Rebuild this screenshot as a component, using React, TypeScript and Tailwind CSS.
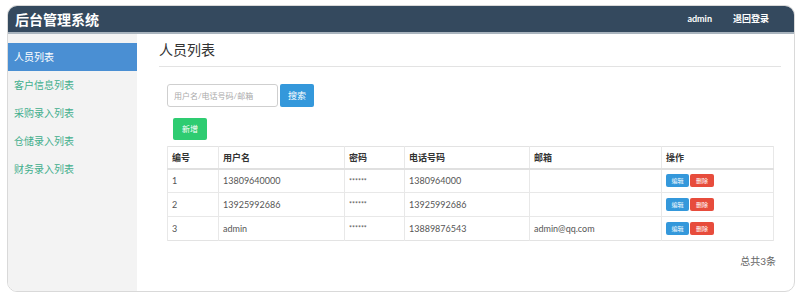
import { useState } from 'react'

type User = { id: number; name: string; phone: string; email: string }

const users: User[] = [
  { id: 1, name: '13809640000', phone: '1380964000', email: '' },
  { id: 2, name: '13925992686', phone: '13925992686', email: '' },
  { id: 3, name: 'admin', phone: '13889876543', email: 'admin@qq.com' },
]

const menu = ['人员列表', '客户信息列表', '采购录入列表', '仓储录入列表', '财务录入列表']

const font = { fontFamily: 'Lato, "Noto Sans CJK SC", sans-serif' }

/** 后台管理：人员列表页 */
export default function App() {
  const [active] = useState(0)
  const [keyword, setKeyword] = useState('')

  return (
    <div className="h-[298px] w-[800px] bg-white pb-[6px] pl-[7px] pr-[5px] pt-[5px]" style={font}>
      <div className="flex h-full flex-col overflow-hidden rounded-[10px] border border-[#d9d9d9] bg-white">
        <header className="flex h-[28px] shrink-0 items-center border-b-2 border-[#a9b4be] bg-[#34495e] pl-[7px] pr-[25px] text-white">
          <span className="text-[14px] font-bold">后台管理系统</span>
          <span className="ml-auto text-[9px] font-bold">admin</span>
          <span className="ml-[21px] text-[9px] font-bold">退回登录</span>
        </header>

        <div className="flex min-h-0 flex-1">
          <aside className="w-[129px] shrink-0 bg-[#f3f3f3] pt-[9px]">
            {menu.map((m, i) => (
              <div
                key={m}
                className={
                  i === active
                    ? 'flex h-[28px] items-center bg-[#4a8fd3] pl-[6px] text-[10px] text-white'
                    : 'flex h-[28px] items-center pl-[6px] text-[10px] text-[#3fae8c]'
                }
              >
                {m}
              </div>
            ))}
          </aside>

          <main className="flex-1 pl-[22px] pr-[13px] pt-[6px]">
            <h1 className="border-b border-[#e3e3e3] pb-[7px] text-[14px] leading-[19px] text-[#333]">人员列表</h1>

            <div className="mt-[17px] flex items-center gap-[2px] pl-[8px]">
              <input
                value={keyword}
                onChange={(e) => setKeyword(e.target.value)}
                placeholder="用户名/电话号码/邮箱"
                className="h-[23px] w-[111px] rounded-[3px] border border-[#cfcfcf] px-[6px] text-[8px] text-[#555] outline-none placeholder:text-[#aaa]"
              />
              <button className="h-[23px] w-[34px] rounded-[2px] bg-[#3498db] text-[9px] text-white">搜索</button>
            </div>

            <button className="ml-[14px] mt-[11px] h-[22px] w-[34px] rounded-[2px] bg-[#2ecc71] text-[8px] text-white">新增</button>

            <table className="ml-[8px] mt-[6px] w-[607px] table-fixed border-collapse border border-[#e3e3e3] text-[9px] text-[#555]">
              <colgroup>
                <col className="w-[51px]" />
                <col className="w-[126px]" />
                <col className="w-[60px]" />
                <col className="w-[125px]" />
                <col className="w-[132px]" />
                <col />
              </colgroup>
              <thead>
                <tr className="h-[22px] border-b-2 border-[#e0e0e0] text-left text-[#333]">
                  {['编号', '用户名', '密码', '电话号码', '邮箱', '操作'].map((h) => (
                    <th key={h} className="border-x border-[#e8e8e8] pl-[4px] font-semibold">
                      {h}
                    </th>
                  ))}
                </tr>
              </thead>
              <tbody>
                {users.map((u) => (
                  <tr key={u.id} className="h-[24px] border-t border-[#e8e8e8]">
                    <td className="border-x border-[#e8e8e8] pl-[4px]">{u.id}</td>
                    <td className="border-x border-[#e8e8e8] pl-[4px]">{u.name}</td>
                    <td className="border-x border-[#e8e8e8] pl-[4px] text-[7px]">******</td>
                    <td className="border-x border-[#e8e8e8] pl-[4px]">{u.phone}</td>
                    <td className="border-x border-[#e8e8e8] pl-[4px]">{u.email}</td>
                    <td className="border-x border-[#e8e8e8] pl-[4px]">
                      <div className="flex gap-[1px]">
                        <button className="h-[13px] w-[23px] rounded-[2px] bg-[#3498db] text-[6px] text-white">编辑</button>
                        <button className="h-[13px] w-[24px] rounded-[2px] bg-[#e74c3c] text-[6px] text-white">删除</button>
                      </div>
                    </td>
                  </tr>
                ))}
              </tbody>
            </table>

            <div className="mt-[13px] w-[617px] text-right text-[10px] text-[#666]">总共3条</div>
          </main>
        </div>
      </div>
    </div>
  )
}
